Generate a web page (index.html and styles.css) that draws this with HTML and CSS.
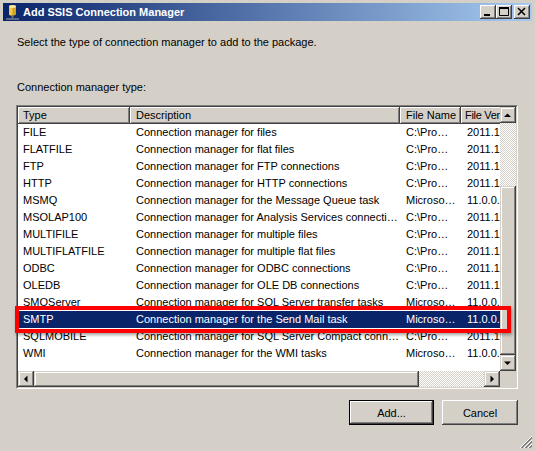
FILE: index.html
```html
<!DOCTYPE html>
<html lang="en">
<head>
  <meta charset="UTF-8">
  <title>Add SSIS Connection Manager</title>
  <link rel="stylesheet" href="styles.css">
</head>
<body>
  <div class="window">
    <!-- Barra de titulo -->
    <div class="titlebar">
      <svg class="app-icon" width="16" height="16" viewBox="0 0 16 16">
        <path d="M4 2.5v7.5c0 1 1.6 1.6 3.5 1.6S11 11 11 10V2.5z" fill="#d6a21e"/>
        <path d="M4 2.5v7.5c0 1 1.6 1.6 3.5 1.6V2.5z" fill="#f0c848"/>
        <ellipse cx="7.5" cy="2.5" rx="3.5" ry="1.4" fill="#fbeaa0"/>
        <rect x="6.5" y="11.5" width="2" height="2.5" fill="#707070"/>
        <rect x="1" y="14" width="13" height="2" fill="#5a6a88"/>
      </svg>
      <span class="title">Add SSIS Connection Manager</span>
      <div class="caption-buttons">
        <div class="cap-btn">
          <svg width="16" height="14"><rect x="4" y="9" width="6" height="2" fill="#000"/></svg>
        </div>
        <div class="cap-btn">
          <svg width="16" height="14"><path d="M3.5 2.5h9v8h-9z" fill="none" stroke="#000"/><rect x="3" y="2" width="10" height="2" fill="#000"/></svg>
        </div>
        <div class="cap-btn close">
          <svg width="16" height="14"><path d="M4 3l7 7M11 3l-7 7" stroke="#000" stroke-width="1.6"/></svg>
        </div>
      </div>
    </div>

    <div class="content">
      <p class="intro">Select the type of connection manager to add to the package.</p>
      <p class="label">Connection manager type:</p>

      <!-- Lista -->
      <div class="listview">
        <div class="lv-inner">
          <div class="lv-main">
            <div class="lv-viewport">
              <div class="lv-row lv-header">
                <div class="hd">Type</div>
                <div class="hd">Description</div>
                <div class="hd">File Name</div>
                <div class="hd hd-last">File Ver</div>
              </div>
              <div class="lv-row"><div>FILE</div><div>Connection manager for files</div><div>C:\Pro…</div><div>2011.1</div></div>
              <div class="lv-row"><div>FLATFILE</div><div>Connection manager for flat files</div><div>C:\Pro…</div><div>2011.1</div></div>
              <div class="lv-row"><div>FTP</div><div>Connection manager for FTP connections</div><div>C:\Pro…</div><div>2011.1</div></div>
              <div class="lv-row"><div>HTTP</div><div>Connection manager for HTTP connections</div><div>C:\Pro…</div><div>2011.1</div></div>
              <div class="lv-row"><div>MSMQ</div><div>Connection manager for the Message Queue task</div><div>Microso…</div><div>11.0.0.</div></div>
              <div class="lv-row"><div>MSOLAP100</div><div>Connection manager for Analysis Services connecti…</div><div>C:\Pro…</div><div>2011.1</div></div>
              <div class="lv-row"><div>MULTIFILE</div><div>Connection manager for multiple files</div><div>C:\Pro…</div><div>2011.1</div></div>
              <div class="lv-row"><div>MULTIFLATFILE</div><div>Connection manager for multiple flat files</div><div>C:\Pro…</div><div>2011.1</div></div>
              <div class="lv-row"><div>ODBC</div><div>Connection manager for ODBC connections</div><div>C:\Pro…</div><div>2011.1</div></div>
              <div class="lv-row"><div>OLEDB</div><div>Connection manager for OLE DB connections</div><div>C:\Pro…</div><div>2011.1</div></div>
              <div class="lv-row"><div>SMOServer</div><div>Connection manager for SQL Server transfer tasks</div><div>Microso…</div><div>11.0.0.</div></div>
              <div class="lv-row selected"><div>SMTP</div><div>Connection manager for the Send Mail task</div><div>Microso…</div><div>11.0.0.</div></div>
              <div class="lv-row"><div>SQLMOBILE</div><div>Connection manager for SQL Server Compact conn…</div><div>C:\Pro…</div><div>2011.1</div></div>
              <div class="lv-row"><div>WMI</div><div>Connection manager for the WMI tasks</div><div>Microso…</div><div>11.0.0.</div></div>
            </div>
            <div class="vscroll">
              <div class="sb-btn"><svg width="16" height="16"><path d="M4 10h7l-3.5-3.5z" fill="#000"/></svg></div>
              <div class="sb-track v-track-top"></div>
              <div class="sb-thumb v-thumb"></div>
              <div class="sb-btn"><svg width="16" height="16"><path d="M4 6.5h7l-3.5 3.5z" fill="#000"/></svg></div>
            </div>
          </div>
          <div class="hscroll-row">
            <div class="hscroll">
              <div class="sb-btn"><svg width="16" height="16"><path d="M9.5 4.5v7L6 8z" fill="#000"/></svg></div>
              <div class="sb-thumb h-thumb"></div>
              <div class="sb-track h-track-end"></div>
              <div class="sb-btn"><svg width="16" height="16"><path d="M6.5 4.5v7L10 8z" fill="#000"/></svg></div>
            </div>
            <div class="corner"></div>
          </div>
        </div>
        <!-- Marco rojo sobre la fila seleccionada -->
        <div class="callout"></div>
      </div>

      <div class="buttons">
        <button class="btn default">Add...</button>
        <button class="btn">Cancel</button>
      </div>
    </div>

    <svg class="grip" width="13" height="13" viewBox="0 0 13 13">
      <path d="M12 0L0 12M12 4L4 12M12 8L8 12" stroke="#fff"/>
      <path d="M12 1L1 12M12 2L2 12M12 5L5 12M12 6L6 12M12 9L9 12M12 10L10 12" stroke="#808080"/>
    </svg>
  </div>
</body>
</html>
```

FILE: styles.css
```css
* {
  box-sizing: border-box;
}

body {
  margin: 0;
  background: #d4d0c8;
  font: 11px "Liberation Sans", Arial, sans-serif;
  color: #000;
}

.window {
  position: relative;
  width: 535px;
  height: 451px;
  padding: 3px;
  background: #d4d0c8;
}

/* Barra de titulo */
.titlebar {
  display: flex;
  align-items: center;
  height: 18px;
  padding: 0 2px;
  background: linear-gradient(to right, #0a246a, #a6caf0);
  color: #fff;
}

.app-icon {
  display: block;
}

.title {
  margin-left: 2px;
  font-weight: bold;
}

.caption-buttons {
  margin-left: auto;
  display: flex;
}

.cap-btn {
  width: 16px;
  height: 14px;
  background: #d4d0c8;
  box-shadow: inset -1px -1px #404040, inset 1px 1px #fff, inset -2px -2px #808080;
}

.cap-btn svg {
  display: block;
}

.cap-btn.close {
  margin-left: 2px;
}

/* Contenido */
.content {
  padding: 0 14px 0 13px;
}

.intro {
  margin: 14px 0 0 1px;
  line-height: 14px;
}

.label {
  margin: 31px 0 0 1px;
  line-height: 14px;
}

/* Lista */
.listview {
  position: relative;
  margin-top: 11px;
  height: 284px;
  border: 1px solid;
  border-color: #808080 #fff #fff #808080;
}

.lv-inner {
  height: 100%;
  border: 1px solid;
  border-color: #404040 #d4d0c8 #d4d0c8 #404040;
  background: #fff;
  display: flex;
  flex-direction: column;
}

.lv-main {
  display: flex;
  height: 264px;
}

.lv-viewport {
  width: 482px;
  overflow: hidden;
}

.lv-row {
  display: grid;
  grid-template-columns: 112px 270px 61px 100px;
  width: 543px;
  height: 17px;
  line-height: 17px;
  white-space: nowrap;
}

.lv-row div {
  overflow: hidden;
  padding-left: 6px;
}

.lv-row div:first-child {
  padding-left: 5px;
}

.lv-row.selected {
  background: #0a246a;
  color: #fff;
}

.lv-header {
  background: #d4d0c8;
}

.lv-header .hd {
  box-shadow: inset -1px -1px #404040, inset 1px 1px #fff, inset -2px -2px #808080;
  line-height: 16px;
}

.lv-header .hd-last {
  padding-left: 4px;
  letter-spacing: -0.3px;
}

/* Barras de desplazamiento */
.vscroll {
  width: 16px;
  display: flex;
  flex-direction: column;
}

.sb-btn,
.sb-thumb {
  flex: none;
  background: #d4d0c8;
  box-shadow: inset -1px -1px #404040, inset 1px 1px #d4d0c8, inset -2px -2px #808080, inset 2px 2px #fff;
}

.sb-btn {
  width: 16px;
  height: 16px;
}

.sb-btn svg {
  display: block;
}

.sb-track {
  flex: none;
  background-color: #fff;
  background-image: conic-gradient(#d4d0c8 25%, transparent 0 50%, #d4d0c8 0 75%, transparent 0);
  background-size: 2px 2px;
}

.v-track-top {
  height: 63px;
}

.v-thumb {
  height: 169px;
}

.hscroll-row {
  display: flex;
  height: 16px;
}

.hscroll {
  display: flex;
  width: 482px;
}

.h-thumb {
  width: 385px;
}

.h-track-end {
  width: 65px;
}

.corner {
  width: 16px;
  background: #d4d0c8;
}

.callout {
  position: absolute;
  left: -2px;
  top: 200px;
  width: 496px;
  height: 27px;
  border: 4px solid #f00;
  box-shadow: 1px 2px 3px rgba(0, 0, 0, 0.35);
}

/* Botones */
.buttons {
  display: flex;
  justify-content: flex-end;
  gap: 8px;
  margin-top: 11px;
}

.btn {
  width: 76px;
  height: 25px;
  padding: 0;
  border: none;
  background: #d4d0c8;
  font: 11px "Liberation Sans", Arial, sans-serif;
  color: #000;
  box-shadow: inset -1px -1px #404040, inset 1px 1px #fff, inset -2px -2px #808080;
}

.btn.default {
  width: 85px;
  border: 1px solid #000;
}

.grip {
  position: absolute;
  right: 2px;
  bottom: 2px;
}
```
